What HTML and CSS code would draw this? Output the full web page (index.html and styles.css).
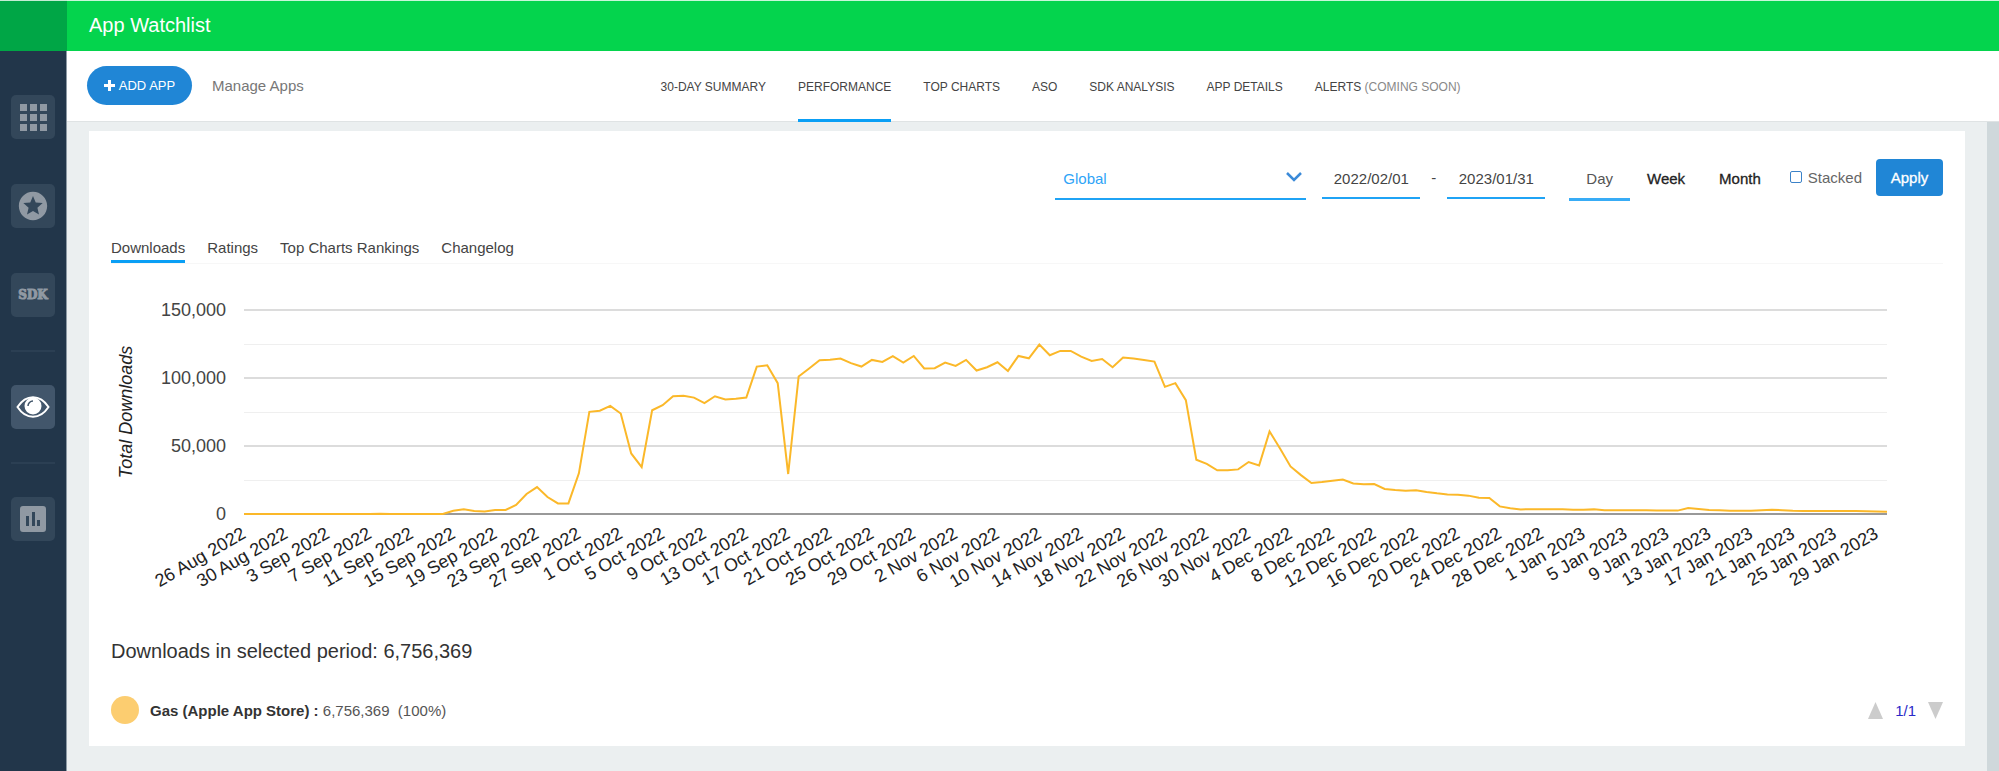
FILE: index.html
```html
<!DOCTYPE html>
<html lang="en">

<head>
    <meta charset="UTF-8">
    <meta name="viewport" content="width=device-width, initial-scale=1.0">
    <title>App Watchlist</title>
    <link rel="stylesheet" href="styles.css">
</head>

<body>

    <aside class="sidebar">
        <div class="sidebar-top"></div>
        <nav class="sidebar-nav">
            <a href="#" class="side-link" aria-label="Explorer">
                <svg width="28" height="28" viewBox="0 0 28 28" fill="currentColor">
                    <path d="M1 1h7v7H1zM11 1h7v7h-7zM21 1h7v7h-7zM1 11h7v7H1zM11 11h7v7h-7zM21 11h7v7h-7zM1 21h7v7H1zM11 21h7v7h-7zM21 21h7v7h-7z"/>
                </svg>
            </a>
            <a href="#" class="side-link" aria-label="Top charts">
                <svg width="34" height="34" viewBox="0 0 24 24" fill="currentColor">
                    <path d="M11.99 2C6.47 2 2 6.48 2 12s4.47 10 9.99 10C17.52 22 22 17.52 22 12S17.52 2 11.99 2zm4.24 16L12 15.45 7.77 18l1.12-4.81-3.73-3.23 4.92-.42L12 5l1.92 4.53 4.92.42-3.73 3.23L16.23 18z"/>
                </svg>
            </a>
            <a href="#" class="side-link sdk">SDK</a>
            <hr>
            <a href="#" class="side-link active" aria-label="Watchlist">
                <svg width="34" height="24" viewBox="0 0 34 24">
                    <path d="M1.500 12C10 -1 24 -1 32.500 12C24 25 10 25 1.500 12Z" fill="none" stroke="currentColor" stroke-width="2"/>
                    <circle cx="17" cy="11" r="8.500" fill="currentColor"/>
                    <path d="M12 11a5 5 0 0 1 5-5" fill="none" stroke="#42566b" stroke-width="1.500"/>
                </svg>
            </a>
            <hr>
            <a href="#" class="side-link" aria-label="Reports">
                <svg width="26" height="26" viewBox="0 0 26 26" fill="currentColor" fill-rule="evenodd">
                    <path d="M3 0h20a3 3 0 0 1 3 3v20a3 3 0 0 1-3 3H3a3 3 0 0 1-3-3V3a3 3 0 0 1 3-3zM6 10v10h3V10zM12 6v14h3V6zM17 14v6h3v-6z"/>
                </svg>
            </a>
        </nav>
    </aside>

    <div class="page">
        <header class="header">
            <h1>App Watchlist</h1>
        </header>

        <div class="toolbar">
            <div class="toolbar-left">
                <button type="button" class="add-app">
                    <svg width="11" height="11" viewBox="0 0 11 11" fill="currentColor"><path d="M4 0h3v4h4v3H7v4H4V7H0V4h4z"/></svg>
                    ADD APP
                </button>
                <a href="#" class="manage">Manage Apps</a>
            </div>
            <nav class="main-tabs">
                <a href="#">30-DAY SUMMARY</a>
                <a href="#" class="active">PERFORMANCE</a>
                <a href="#">TOP CHARTS</a>
                <a href="#">ASO</a>
                <a href="#">SDK ANALYSIS</a>
                <a href="#">APP DETAILS</a>
                <a href="#">ALERTS <span>(COMING SOON)</span></a>
            </nav>
        </div>

        <main class="content">
            <section class="card">
                <form class="filters">
                    <div class="country">
                        <select aria-label="Country">
                            <option>Global</option>
                        </select>
                        <svg width="16" height="10" viewBox="0 0 16 10" fill="none" stroke="#3b8ad8" stroke-width="2.500"><path d="M1 1l7 7 7-7"/></svg>
                    </div>
                    <input type="text" class="date" value="2022/02/01" aria-label="Start date">
                    <span class="dash">-</span>
                    <input type="text" class="date" value="2023/01/31" aria-label="End date">
                    <div class="interval">
                        <button type="button" class="active">Day</button>
                        <button type="button">Week</button>
                        <button type="button">Month</button>
                    </div>
                    <label class="stacked"><input type="checkbox"> Stacked</label>
                    <button type="button" class="apply">Apply</button>
                </form>

                <nav class="sub-tabs">
                    <a href="#" class="active">Downloads</a>
                    <a href="#">Ratings</a>
                    <a href="#">Top Charts Rankings</a>
                    <a href="#">Changelog</a>
                </nav>

                <svg id="chart" class="chart" role="img" aria-label="Total downloads by day"></svg>

                <h2 class="total">Downloads in selected period: 6,756,369</h2>

                <div class="legend">
                    <span class="dot"></span>
                    <span><b>Gas (Apple App Store) :</b> 6,756,369 &nbsp;(100%)</span>
                    <div class="pager">
                        <button type="button" aria-label="Previous"><svg width="15" height="17" viewBox="0 0 15 17"><path d="M0 17L7.500 0L15 17z" fill="#ccc"/></svg></button>
                        <span>1/1</span>
                        <button type="button" aria-label="Next"><svg width="15" height="17" viewBox="0 0 15 17"><path d="M0 0h15L7.500 17z" fill="#ccc"/></svg></button>
                    </div>
                </div>
            </section>
        </main>
    </div>

    <script src="chart.js"></script>

</body>

</html>
```
FILE: styles.css
```css
* {
    box-sizing: border-box;
}

body {
    margin: 0;
    display: flex;
    min-height: 100vh;
    font-family: "Liberation Sans", Arial, sans-serif;
    font-size: 15px;
    color: #444;
    background-color: #ebeff0;
}

a {
    color: inherit;
    text-decoration: none;
}

button,
input,
select {
    font: inherit;
    color: inherit;
    background: none;
    border: 0;
    padding: 0;
    margin: 0;
}

/* Sidebar */
.sidebar {
    flex: 0 0 67px;
    background-color: #22364a;
    border-right: 1px solid #8d9aa5;
}

.sidebar-top {
    height: 51px;
    margin-right: -1px;
    background-color: #00a646;
    border-top: 1px solid #c4ecd3;
}

.sidebar-nav {
    display: flex;
    flex-direction: column;
    padding: 44px 11px;
    gap: 45px;
}

.sidebar-nav hr {
    width: 44px;
    margin: -12px 0;
    border: 0;
    border-top: 2px solid #2b3f53;
}

.side-link {
    width: 44px;
    height: 44px;
    display: flex;
    align-items: center;
    justify-content: center;
    border-radius: 5px;
    background-color: #33475a;
    color: #9099a3;
}

.side-link.active {
    background-color: #42566b;
    color: #fff;
}

.sdk {
    font-family: "DejaVu Serif", serif;
    font-weight: bold;
    font-size: 12px;
    -webkit-text-stroke: 1px #9099a3;
}

/* Header */
.page {
    flex: 1;
    min-width: 0;
    display: flex;
    flex-direction: column;
}

.header {
    height: 51px;
    display: flex;
    align-items: center;
    padding-left: 22px;
    background-color: #04d44d;
    border-top: 1px solid #c8f7d9;
    color: #fff;
}

.header h1 {
    margin: 0;
    font-size: 20px;
    line-height: 22px;
    padding-bottom: 2px;
    font-weight: normal;
}

.toolbar {
    height: 71px;
    display: flex;
    padding-left: 20px;
    background-color: #fff;
    border-bottom: 1px solid #dfe3e4;
}

.toolbar-left {
    flex: 0 0 30%;
    display: flex;
    align-items: center;
    gap: 20px;
    padding-bottom: 2px;
}

.add-app {
    width: 105px;
    height: 39px;
    display: flex;
    align-items: center;
    justify-content: center;
    gap: 4px;
    border-radius: 20px;
    background-color: #2086d6;
    color: #fff;
    font-size: 13px;
}

.manage {
    color: #777;
}

.main-tabs {
    display: flex;
    gap: 32px;
    font-size: 12px;
    white-space: nowrap;
}

.main-tabs a {
    height: 71px;
    line-height: 73px;
}

.main-tabs a.active {
    border-bottom: 3px solid #0a9ff5;
}

.main-tabs span {
    color: #888;
}

/* Card */
.content {
    flex: 1;
    padding: 9px 22px 24px;
    border-right: 12px solid #cfd8db;
}

.card {
    padding: 28px 22px 22px;
    background-color: #fff;
}

.filters {
    display: flex;
    justify-content: flex-end;
    align-items: flex-start;
    height: 76px;
}

.country {
    width: 251px;
    display: flex;
    align-items: center;
    margin-right: 16px;
    border-bottom: 2px solid #1fa3f5;
}

.country select {
    flex: 1;
    height: 39px;
    padding-left: 8px;
    appearance: none;
    color: #2ea4f7;
}

.country svg {
    margin: 0 4px 4px -20px;
    pointer-events: none;
}

.date {
    width: 98px;
    height: 40px;
    text-align: center;
    border-bottom: 2px solid #1fa3f5;
}

.dash {
    width: 27px;
    line-height: 38px;
    text-align: center;
}

.interval {
    display: flex;
    margin-left: 24px;
}

.interval button {
    height: 42px;
    padding: 0 17px;
    color: #222;
    -webkit-text-stroke: 0.3px #222;
    border-bottom: 3px solid transparent;
}

.interval button.active {
    color: #555;
    -webkit-text-stroke: 0;
    border-color: #38acf6;
}

.stacked {
    display: flex;
    align-items: center;
    gap: 6px;
    height: 36px;
    margin: 0 14px 0 12px;
    color: #666;
}

.stacked input {
    appearance: none;
    width: 12px;
    height: 12px;
    border: 1px solid #3b82c8;
    border-radius: 2px;
}

.apply {
    width: 67px;
    height: 37px;
    border-radius: 4px;
    background-color: #2086d6;
    color: #fff;
    -webkit-text-stroke: 0.3px #fff;
}

.sub-tabs {
    display: flex;
    gap: 22px;
    border-bottom: 1px solid #f7f7f7;
}

.sub-tabs a {
    height: 28px;
    line-height: 26px;
    border-bottom: 3px solid transparent;
}

.sub-tabs a.active {
    border-color: #0a9ff5;
}

/* Chart */
.chart {
    display: block;
    width: 100%;
    height: 360px;
    font-size: 18px;
}

.total {
    margin: 15px 0 33px;
    font-size: 20px;
    line-height: 24px;
    font-weight: normal;
    color: #333;
}

.legend {
    display: flex;
    align-items: center;
    gap: 11px;
    color: #555;
}

.legend b {
    color: #333;
}

.dot {
    width: 28px;
    height: 28px;
    border-radius: 50%;
    background-color: #fccd70;
}

.pager {
    display: flex;
    align-items: center;
    gap: 12px;
    margin-left: auto;
    color: #2a2ac8;
}

.pager svg {
    display: block;
}
```
FILE: chart.js
```js
// daily downloads, starting 26 Aug 2022
const downloads = [
    0, 0, 0, 0, 0, 0, 0, 0, 0, 0, 0, 0, 0, 200, 0, 0, 0, 0, 0, 0,
    2400, 3400, 2200, 1800, 3000, 3000, 6600, 14700, 19800, 12500,
    7800, 7800, 29900, 75100, 75900, 79500, 73900, 44500, 34500, 76300,
    80000, 86600, 86900, 85600, 81500, 86600, 84200, 84700, 85600, 108400,
    109400, 96200, 29400, 101100, 107000, 113000, 113500, 114300, 110900, 108400,
    113300, 111800, 116000, 111300, 116200, 107000, 107200, 111300, 108900, 113300,
    105500, 107900, 111600, 105200, 116200, 114500, 124600, 116700, 119900, 119900,
    115700, 112600, 114000, 107900, 115000, 114300, 113300, 112100, 93500, 96200,
    83700, 39900, 36900, 32100, 32100, 32800, 38200, 35700, 60700, 48200,
    35000, 28600, 22800, 23500, 24500, 25400, 22500, 21800, 22000, 18400,
    17600, 17100, 17400, 16200, 15200, 14400, 14200, 13500, 12000, 11700,
    5600, 4200, 3400, 3500, 3500, 3500, 3500, 3200, 3200, 3400,
    2700, 2700, 2700, 2700, 2700, 2500, 2500, 2500, 4400, 3700,
    2900, 2700, 2450, 2450, 2450, 2700, 3100, 2800, 2400, 2200,
    2200, 2200, 2200, 2200, 2200, 2000, 1800, 1700
];

const chart = document.getElementById("chart");
const left = 133;
const right = 56;
const top150 = 46;
const bottom = 250;

function add(name, attrs, text) {
    const el = document.createElementNS("http://www.w3.org/2000/svg", name);
    for (const key in attrs) {
        el.setAttribute(key, attrs[key]);
    }
    if (text) {
        el.textContent = text;
    }
    chart.appendChild(el);
}

function drawChart() {
    chart.innerHTML = "";
    const end = chart.clientWidth - right;
    const step = (end - left) / (downloads.length - 1);
    const yPos = value => bottom - value / 150000 * (bottom - top150);

    for (let value = 0; value <= 150000; value += 25000) {
        const major = value % 50000 === 0;
        add("rect", {
            x: left,
            y: Math.round(yPos(value)) - (major ? 1 : 0),
            width: end - left,
            height: major ? 2 : 1,
            fill: value === 0 ? "#999" : major ? "#dcdcdc" : "#efefef"
        });
        if (major) {
            add("text", { x: 115, y: yPos(value) + 6, "text-anchor": "end", fill: "#444" }, value.toLocaleString("en-US"));
        }
    }

    add("text", {
        transform: "translate(21 148) rotate(-90)",
        "text-anchor": "middle",
        "font-style": "italic",
        fill: "#222"
    }, "Total Downloads");

    const points = downloads.map((value, i) => `${left + i * step},${yPos(value)}`);
    add("polyline", { points: points.join(" "), fill: "none", stroke: "#fbb829", "stroke-width": 2 });

    for (let i = 0; i < downloads.length; i += 4) {
        const date = new Date(Date.UTC(2022, 7, 26 + i));
        const month = date.toLocaleString("en-US", { month: "short", timeZone: "UTC" });
        add("text", {
            transform: `translate(${left + i * step + 3} 273) rotate(-30)`,
            "text-anchor": "end",
            fill: "#222"
        }, `${date.getUTCDate()} ${month} ${date.getUTCFullYear()}`);
    }
}

drawChart();
window.addEventListener("resize", drawChart);
```
